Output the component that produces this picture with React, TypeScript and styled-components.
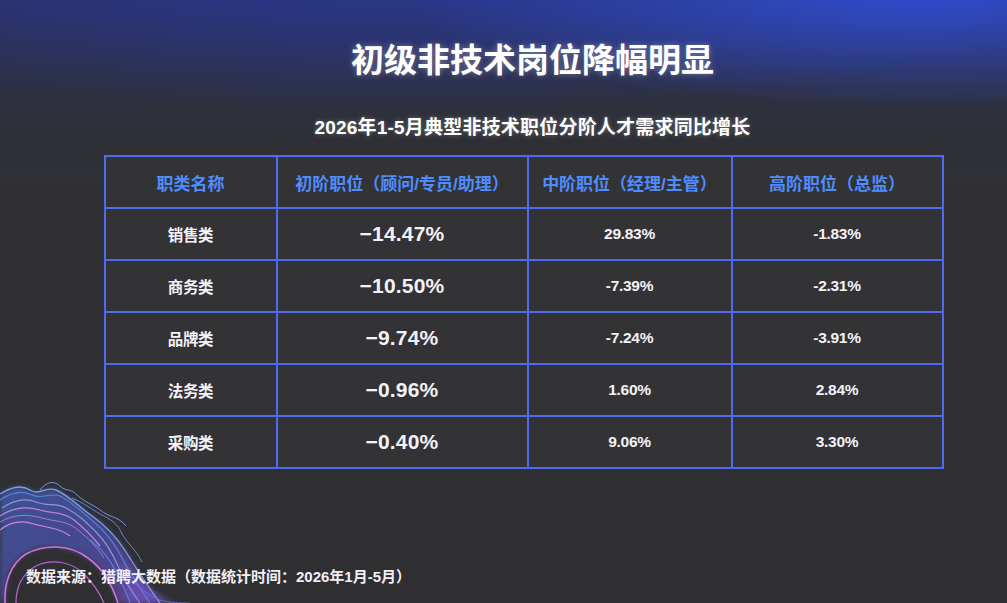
import React from 'react';
import styled, { createGlobalStyle } from 'styled-components';

const GlobalStyle = createGlobalStyle`
  html, body {
    margin: 0;
    padding: 0;
    background: #2f3034;
  }
  * {
    box-sizing: border-box;
  }
`;

const Slide = styled.div`
  position: relative;
  width: 1007px;
  height: 603px;
  overflow: hidden;
  display: flex;
  flex-direction: column;
  align-items: center;
  padding-left: 58px;
  font-family: 'Liberation Sans', 'Noto Sans CJK SC', sans-serif;
  color: #fff;
  background:
    radial-gradient(ellipse 520px 120px at 92% -10px, rgba(48, 78, 215, 0.95), rgba(48, 78, 215, 0) 100%),
    radial-gradient(ellipse 700px 130px at 40% -20px, rgba(40, 58, 160, 0.7), rgba(40, 58, 160, 0) 100%),
    linear-gradient(to bottom, #2b3160 0px, #2d3048 70px, #2f3037 130px, #303034 200px, #2f2f32 100%);
`;

const Title = styled.h1`
  margin: 41px 0 0;
  font-size: 33px;
  line-height: 40px;
  font-weight: 700;
  letter-spacing: 0;
  text-shadow: 0 0 6px rgba(255, 255, 255, 0.35);
`;

const Subtitle = styled.h2`
  margin: 35px 0 0;
  font-size: 19px;
  line-height: 24px;
  font-weight: 700;
  letter-spacing: 0.2px;
  text-shadow: 0 0 5px rgba(255, 255, 255, 0.3);
`;

const Table = styled.table`
  margin: 15px 18px 0 0;
  border-collapse: collapse;
  table-layout: fixed;
  width: 838px;
  border: 2px solid #4b6cf2;
  background: #333336;
  position: relative;
  z-index: 1;
`;

const Cell = styled.td<{ $big?: boolean }>`
  height: 52px;
  border: 2px solid #4b6cf2;
  text-align: center;
  vertical-align: middle;
  font-weight: 700;
  font-size: ${(p) => (p.$big ? '21px' : '15.5px')};
  letter-spacing: ${(p) => (p.$big ? '0.2px' : '-0.3px')};
  color: #f4f2f6;
  padding: 0;
`;

const HeadCell = styled.th`
  height: 52px;
  border: 2px solid #4b6cf2;
  text-align: center;
  vertical-align: middle;
  font-weight: 700;
  font-size: 17px;
  color: #4f8dff;
  padding: 0;
`;

const Footer = styled.div`
  margin-top: auto;
  margin-bottom: 16px;
  margin-left: -58px;
  align-self: flex-start;
  padding-left: 26px;
  font-size: 15px;
  line-height: 20px;
  font-weight: 700;
  color: #f2f0f6;
  position: relative;
  z-index: 1;
`;

const Swirl = styled.svg`
  position: absolute;
  left: 0;
  bottom: 0;
  width: 200px;
  height: 123px;
  z-index: 0;
`;

const rows = [
  ['销售类', '−14.47%', '29.83%', '-1.83%'],
  ['商务类', '−10.50%', '-7.39%', '-2.31%'],
  ['品牌类', '−9.74%', '-7.24%', '-3.91%'],
  ['法务类', '−0.96%', '1.60%', '2.84%'],
  ['采购类', '−0.40%', '9.06%', '3.30%'],
];

// wave strands running along the crest of the swirl
const strands = [
  { d: 'M0 14 C10 8 20 4 30 10 C40 16 46 6 56 10 C68 15 78 26 92 36 C106 46 116 56 126 72 C136 88 146 104 160 123', c: '#7ea8f6', w: 1.4 },
  { d: 'M0 20 C12 12 22 10 32 15 C42 20 50 12 60 16 C72 22 80 30 94 42 C106 52 114 62 122 78 C130 94 140 108 150 123', c: '#5a86ea', w: 1.2 },
  { d: 'M2 28 C14 20 26 18 36 22 C48 27 56 22 66 28 C78 34 86 42 96 52 C106 62 112 72 118 86 C124 100 132 112 140 123', c: '#8f9cf4', w: 1.1 },
  { d: 'M0 36 C12 28 26 26 40 30 C54 34 64 32 74 40 C84 48 92 56 100 66', c: '#c98ae6', w: 1.3 },
  { d: 'M0 42 C14 34 28 34 42 38 C56 42 66 40 78 50 C88 58 96 66 104 78', c: '#a57ee8', w: 1 },
  { d: 'M40 10 C46 2 54 0 60 6 C66 12 70 8 76 14 C84 22 92 24 100 30 C110 38 118 36 126 46', c: '#7a9ef2', w: 1 },
  { d: 'M72 18 C82 22 90 28 100 34 C112 40 118 44 122 54 C128 64 136 70 142 82', c: '#6a90ee', w: 1 },
  { d: 'M5 123 C4 104 10 84 26 74 C44 64 70 64 88 78 C102 88 112 104 118 123', c: '#e07ade', w: 1.6 },
  { d: 'M16 123 C16 108 22 94 36 86 C52 78 72 82 84 94 C94 104 100 114 104 123', c: '#c46ae0', w: 1.2 },
  { d: 'M0 50 C10 42 22 40 34 44 C48 48 60 48 70 56', c: '#e08ae6', w: 1.1 },
  { d: 'M90 60 C104 70 112 82 118 96 C124 108 128 116 130 123', c: '#5a86ea', w: 1.1 },
  { d: 'M130 100 C140 108 150 116 160 120 C170 123 180 123 190 123', c: '#6a6ee0', w: 1 },
];

export default function App() {
  return (
    <>
      <GlobalStyle />
      <Slide>
        <Swirl viewBox="0 0 200 123">
          <defs>
            <linearGradient id="band" x1="0" y1="0" x2="1" y2="1">
              <stop offset="0" stopColor="#4a6fe0" />
              <stop offset="0.55" stopColor="#5a5cd8" />
              <stop offset="1" stopColor="#8a4ed0" />
            </linearGradient>
            <filter id="soft">
              <feGaussianBlur stdDeviation="2.5" />
            </filter>
            <filter id="fine">
              <feGaussianBlur stdDeviation="0.45" />
            </filter>
          </defs>
          <path
            d="M0 14 C10 8 20 4 30 10 C40 16 46 6 56 10 C68 15 78 26 92 36 C106 46 116 56 126 72 C136 88 146 104 160 123 L118 123 C112 102 98 78 70 70 C44 62 18 70 8 95 L5 123 L0 123 Z"
            fill="url(#band)"
            opacity={0.55}
            filter="url(#soft)"
          />
          <path
            d="M120 80 C134 96 150 110 175 123 L128 123 C126 108 124 94 120 80 Z"
            fill="#7a5ad8"
            opacity={0.45}
            filter="url(#soft)"
          />
          <g filter="url(#fine)">
            {strands.map((p, i) => (
              <path key={i} d={p.d} stroke={p.c} strokeWidth={p.w} fill="none" opacity={0.9} />
            ))}
          </g>
        </Swirl>
        <Title>初级非技术岗位降幅明显</Title>
        <Subtitle>2026年1-5月典型非技术职位分阶人才需求同比增长</Subtitle>
        <Table>
          <colgroup>
            <col style={{ width: 172 }} />
            <col style={{ width: 251 }} />
            <col style={{ width: 204 }} />
            <col style={{ width: 211 }} />
          </colgroup>
          <thead>
            <tr>
              <HeadCell>职类名称</HeadCell>
              <HeadCell>初阶职位（顾问/专员/助理）</HeadCell>
              <HeadCell>中阶职位（经理/主管）</HeadCell>
              <HeadCell>高阶职位（总监）</HeadCell>
            </tr>
          </thead>
          <tbody>
            {rows.map((r) => (
              <tr key={r[0]}>
                <Cell>{r[0]}</Cell>
                <Cell $big>{r[1]}</Cell>
                <Cell>{r[2]}</Cell>
                <Cell>{r[3]}</Cell>
              </tr>
            ))}
          </tbody>
        </Table>
        <Footer>数据来源：猎聘大数据（数据统计时间：2026年1月-5月）</Footer>
      </Slide>
    </>
  );
}
